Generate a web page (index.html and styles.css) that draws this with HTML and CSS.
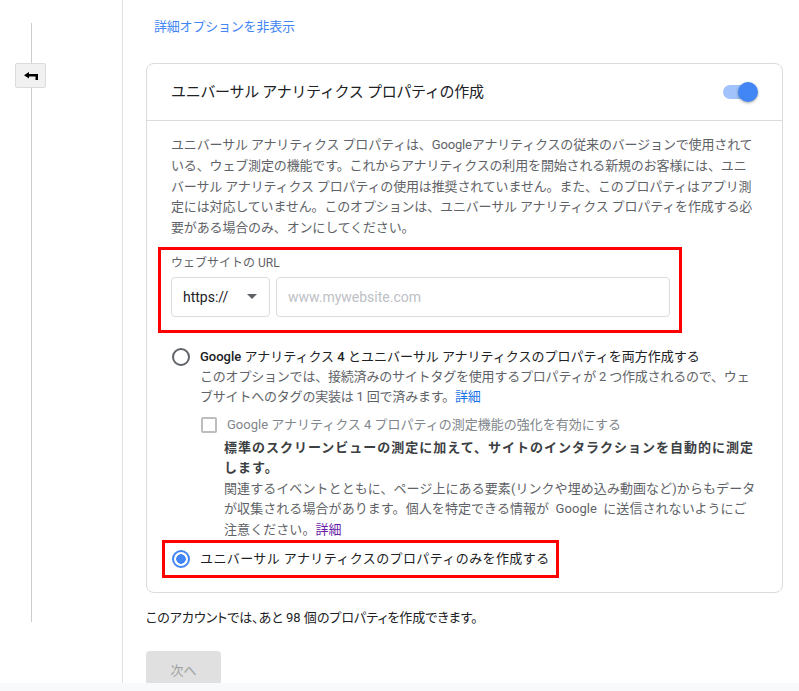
FILE: index.html
```html
<!DOCTYPE html>
<html lang="ja">
<head>
    <meta charset="UTF-8">
    <meta name="viewport" content="width=device-width, initial-scale=1.0">
    <title>プロパティの作成</title>
    <link rel="stylesheet" href="styles.css">
</head>
<body>
    <div class="page">
        <aside class="rail">
            <div class="rail-line rail-line-top"></div>
            <button class="back-btn" type="button" aria-label="戻る">
                <svg width="14" height="8" viewBox="0 0 14 8">
                    <path d="M0 3.2 L5 0 L5 2 L14 2 L14 8 L11.5 8 L11.5 4.5 L5 4.5 L5 6.4 Z" fill="#000"/>
                </svg>
            </button>
            <div class="rail-line rail-line-bottom"></div>
        </aside>

        <main class="content">
            <a class="toggle-link" href="#">詳細オプションを非表示</a>

            <section class="card">
                <header class="card-header">
                    <h2>ユニバーサル アナリティクス プロパティの作成</h2>
                    <div class="switch on"><span class="switch-thumb"></span></div>
                </header>

                <div class="card-body">
                    <p class="intro">ユニバーサル アナリティクス プロパティは、Googleアナリティクスの従来のバージョンで使用されている、ウェブ測定の機能です。これからアナリティクスの利用を開始される新規のお客様には、ユニバーサル アナリティクス プロパティの使用は推奨されていません。また、このプロパティはアプリ測定には対応していません。このオプションは、ユニバーサル アナリティクス プロパティを作成する必要がある場合のみ、オンにしてください。</p>

                    <div class="highlight url-box">
                        <div class="field-label">ウェブサイトの URL</div>
                        <div class="url-row">
                            <div class="select">https://<span class="caret"></span></div>
                            <div class="text-input">www.mywebsite.com</div>
                        </div>
                    </div>

                    <div class="option">
                        <span class="radio"></span>
                        <div class="option-text">
                            <div class="option-label"><span class="latin">Google</span> アナリティクス <span class="latin">4</span> とユニバーサル アナリティクスのプロパティを両方作成する</div>
                            <div class="option-desc">このオプションでは、接続済みのサイトタグを使用するプロパティが 2 つ作成されるので、ウェブサイトへのタグの実装は 1 回で済みます。<a href="#" class="more">詳細</a></div>

                            <div class="check-row">
                                <span class="checkbox"></span>
                                <span class="check-label">Google アナリティクス 4 プロパティの測定機能の強化を有効にする</span>
                            </div>
                            <div class="enhanced">
                                <div class="enhanced-title">標準のスクリーンビューの測定に加えて、サイトのインタラクションを自動的に測定します。</div>
                                <div class="enhanced-desc">関連するイベントとともに、ページ上にある要素(リンクや埋め込み動画など)からもデータが収集される場合があります。個人を特定できる情報が Google に送信されないようにご注意ください。<a href="#" class="more visited">詳細</a></div>
                            </div>
                        </div>
                    </div>

                    <div class="highlight option-box">
                        <span class="radio checked"></span>
                        <span class="option-label">ユニバーサル アナリティクスのプロパティのみを作成する</span>
                    </div>
                </div>
            </section>

            <p class="quota">このアカウントでは、あと 98 個のプロパティを作成できます。</p>

            <button class="next-btn" type="button" disabled>次へ</button>
        </main>
    </div>
    <div class="bottom-bar"></div>
</body>
</html>
```

FILE: styles.css
```css
body {
    margin: 0;
    background: #fff;
    font-family: Roboto, "Noto Sans CJK JP", sans-serif;
    color: #202124;
}
.page {
    display: flex;
    height: 683px;
    overflow: hidden;
}
.rail {
    width: 122px;
    flex-shrink: 0;
    border-right: 1px solid #e0e0e0;
    display: flex;
    flex-direction: column;
    align-items: flex-start;
    padding-top: 23px;
}
.rail-line {
    width: 1px;
    background: #cccccc;
    margin-left: 31px;
}
.rail-line-top {
    height: 40px;
}
.rail-line-bottom {
    height: 534px;
}
.back-btn {
    width: 31px;
    height: 25px;
    margin-left: 15px;
    padding: 0;
    background: #f1f1f1;
    border: 1px solid #dcdcdc;
    border-radius: 2px;
    display: flex;
    align-items: center;
    justify-content: center;
}
.back-btn svg {
    display: block;
    margin-left: 1px;
}
.content {
    flex: 1;
    padding: 17px 16px 0 23px;
    font-size: 13px;
}
.toggle-link {
    display: block;
    margin-left: 8px;
    line-height: 20px;
    color: #4285f4;
    text-decoration: none;
    letter-spacing: -0.2px;
}
.card {
    margin-top: 26px;
    border: 1px solid #dadce0;
    border-radius: 8px;
}
.card-header {
    height: 56px;
    border-bottom: 1px solid #dadce0;
    display: flex;
    align-items: center;
    justify-content: space-between;
    padding: 0 24px;
}
.card-header h2 {
    margin: 0;
    font-size: 15px;
    line-height: 20px;
    font-weight: 400;
    color: #202124;
    letter-spacing: -0.3px;
}
.switch {
    position: relative;
    width: 30px;
    height: 14px;
    border-radius: 7px;
    background: #a1c2fa;
    margin-right: 5px;
}
.switch-thumb {
    position: absolute;
    top: -3px;
    right: -5px;
    width: 20px;
    height: 20px;
    border-radius: 50%;
    background: #4285f4;
    box-shadow: 0 1px 3px rgba(0,0,0,0.35);
}
.card-body {
    padding: 14px 24px 14px 24px;
}
.intro {
    margin: 0;
    line-height: 20.8px;
    color: #5f6368;
    letter-spacing: -0.15px;
}
.highlight {
    border: 3px solid #ff0000;
}
.url-box {
    margin: 8px 0 0 -13px;
    width: 524px;
    padding: 5px 9px 13px 10px;
    box-sizing: border-box;
}
.field-label {
    font-size: 12px;
    line-height: 16px;
    color: #5f6368;
}
.url-row {
    display: flex;
    gap: 6px;
    margin-top: 6px;
}
.select {
    width: 99px;
    height: 40px;
    box-sizing: border-box;
    border: 1px solid #dadce0;
    border-radius: 4px;
    display: flex;
    align-items: center;
    justify-content: space-between;
    padding: 0 12px 0 11px;
    font-size: 14px;
    color: #202124;
}
.caret {
    width: 0;
    height: 0;
    border-left: 5px solid transparent;
    border-right: 5px solid transparent;
    border-top: 5px solid #5f6368;
}
.text-input {
    flex: 1;
    height: 40px;
    box-sizing: border-box;
    border: 1px solid #dadce0;
    border-radius: 4px;
    display: flex;
    align-items: center;
    padding-left: 11px;
    font-size: 14px;
    color: #bdc1c6;
}
.option {
    display: flex;
    gap: 10px;
    margin-top: 14px;
    padding-left: 1px;
}
.radio {
    width: 18px;
    height: 18px;
    box-sizing: border-box;
    border: 2px solid #5f6368;
    border-radius: 50%;
    flex-shrink: 0;
    margin-top: 1px;
}
.radio.checked {
    border-color: #4285f4;
    background: radial-gradient(circle, #4285f4 0 4.5px, #fff 5px);
    margin-top: 0;
}
.option-text {
    flex: 1;
}
.option-label {
    line-height: 20px;
    color: #202124;
}
.latin {
    font-weight: 500;
}
.option-desc {
    line-height: 20px;
    color: #5f6368;
    letter-spacing: -0.2px;
}
.more {
    color: #1a73e8;
    text-decoration: none;
}
.more.visited {
    color: #681da8;
}
.check-row {
    display: flex;
    align-items: center;
    gap: 10px;
    margin-top: 8px;
    padding-left: 1px;
    line-height: 20px;
}
.checkbox {
    width: 16px;
    height: 16px;
    box-sizing: border-box;
    border: 2px solid #bdbdbd;
    border-radius: 2px;
}
.check-label {
    color: #80868b;
}
.enhanced {
    margin-top: 3px;
    padding-left: 24px;
    line-height: 20.5px;
}
.enhanced-title {
    font-weight: 700;
    color: #3c4043;
    letter-spacing: 1px;
}
.enhanced-desc {
    color: #5f6368;
    letter-spacing: 0.07px;
    word-spacing: 3px;
}
.option-box {
    display: inline-flex;
    align-items: center;
    gap: 10px;
    margin-left: -9px;
    padding: 6px 6px 6px 7px;
}
.option-box .option-label {
    letter-spacing: 0.4px;
}
.quota {
    margin: 15px 0 0;
    line-height: 20px;
    color: #202124;
    font-feature-settings: "palt";
}
.next-btn {
    margin-top: 23px;
    width: 75px;
    height: 36px;
    border: none;
    border-radius: 4px;
    background: #e0e0e0;
    color: #9e9e9e;
    font-family: inherit;
    font-size: 13px;
}
.bottom-bar {
    height: 8px;
    background: #f8f9fa;
}
```
